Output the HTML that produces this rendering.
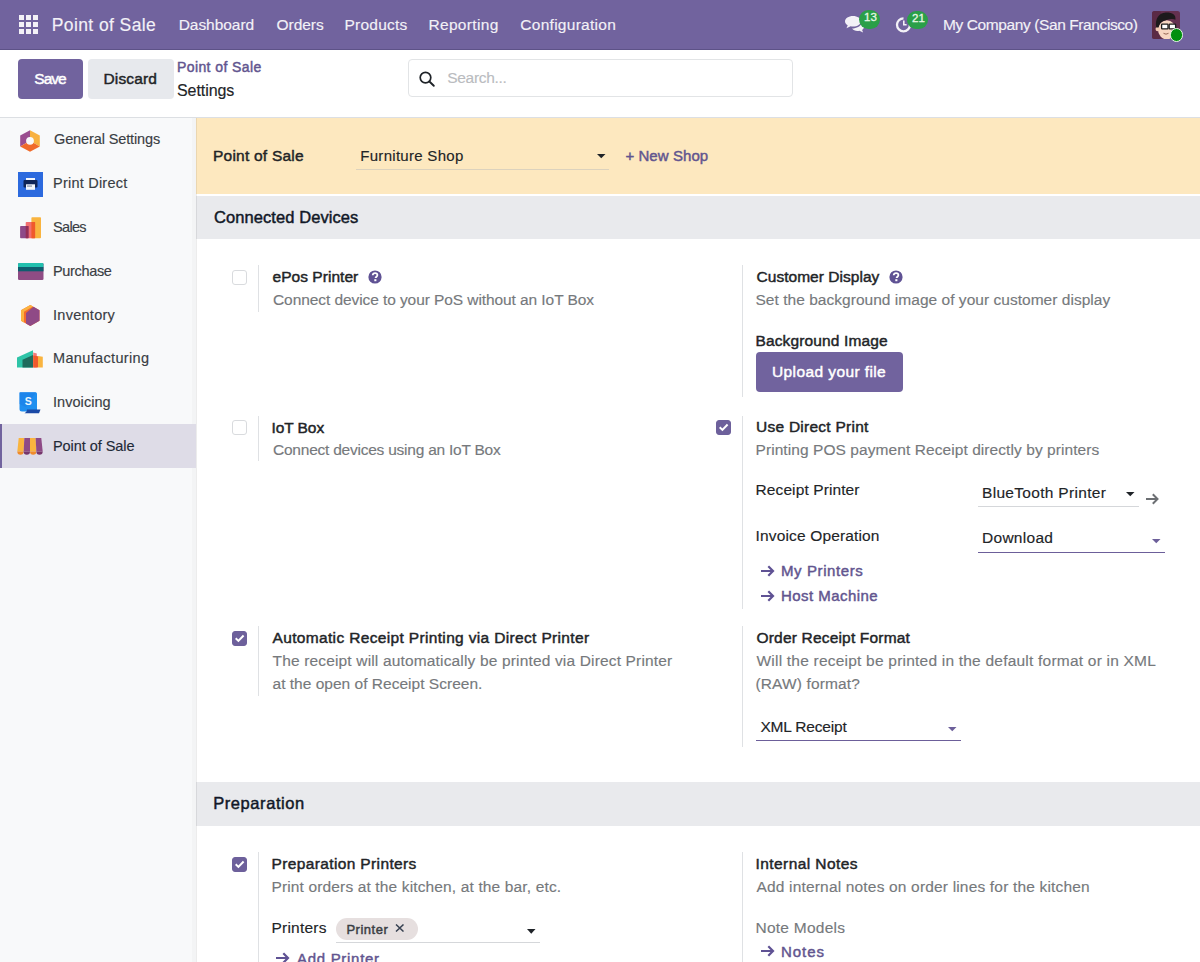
<!DOCTYPE html>
<html><head><meta charset="utf-8">
<style>
*{box-sizing:border-box;margin:0;padding:0}
html,body{width:1200px;height:962px;overflow:hidden;background:#fff;font-family:"Liberation Sans",sans-serif;color:#374151}
.a{position:absolute;white-space:nowrap;line-height:1}
.b{position:absolute}
.vl{position:absolute;width:1px;background:#dfe1e4}
.cb{position:absolute;width:15px;height:15px;border:1px solid #d9dbde;border-radius:3px;background:#fff}
.cbc{background:#6d609b;border-color:#6d609b}
.ul{position:absolute;height:1px;background:#d5d7da}
</style></head><body>
<!-- navbar -->
<div class="b" style="left:0;top:0;width:1200px;height:49px;background:#71639e"></div>
<div class="b" style="left:0;top:48.5px;width:1200px;height:1.5px;background:#5d5287"></div>
<svg class="b" style="left:19px;top:15px" width="19" height="19" viewBox="0 0 19 19" fill="#f3f1f7">
  <rect x="0" y="0" width="5" height="5"/><rect x="7" y="0" width="5" height="5"/><rect x="14" y="0" width="5" height="5"/>
  <rect x="0" y="7" width="5" height="5"/><rect x="7" y="7" width="5" height="5"/><rect x="14" y="7" width="5" height="5"/>
  <rect x="0" y="14" width="5" height="5"/><rect x="7" y="14" width="5" height="5"/><rect x="14" y="14" width="5" height="5"/>
</svg>
<!-- chat icon -->
<svg class="b" style="left:844px;top:15px" width="21" height="18" viewBox="0 0 21 18">
  <path d="M9 1C4.6 1 1 3.3 1 6.3c0 1.6 1 3 2.7 4L2.5 13.2 6.6 11.3c.8.2 1.6.3 2.4.3 4.4 0 8-2.4 8-5.3S13.4 1 9 1z" fill="#f3f1f7"/>
  <path d="M18 8.5c1.3.9 2 2 2 3.3 0 1.2-.7 2.3-1.9 3.1l1 2.6-3.7-1.7c-.6.1-1.2.2-1.9.2-2.4 0-4.5-1-5.4-2.4 4.5-.2 8.4-2.5 9.9-5.1z" fill="#f3f1f7"/>
</svg>
<div class="b" style="left:858.5px;top:9.5px;width:21.5px;height:19.5px;border-radius:10px;background:#2a9f48"></div>
<!-- activity icon -->
<svg class="b" style="left:894px;top:15px" width="20" height="19" viewBox="0 0 20 19">
  <path d="M9.5 3.3A6.5 6.5 0 1 0 16 9.8" fill="none" stroke="#f3f1f7" stroke-width="2.3"/>
  <path d="M9.8 5.5v4.3h2.8" fill="none" stroke="#f3f1f7" stroke-width="1.6"/>
</svg>
<div class="b" style="left:906.5px;top:10.5px;width:21.5px;height:18.5px;border-radius:10px;background:#2a9f48"></div>
<!-- avatar -->
<svg class="b" style="left:1152px;top:10.5px" width="28" height="28" viewBox="0 0 28 28">
  <rect x="0" y="0" width="28" height="28" rx="2.5" fill="#643150"/>
  <rect x="0" y="0" width="9" height="28" rx="2.5" fill="#5a2a45"/>
  <ellipse cx="14.8" cy="18.8" rx="8.8" ry="9.6" fill="#f6d6c2"/>
  <circle cx="5.8" cy="18" r="2.3" fill="#f2c9b4"/>
  <path d="M4.2 16.5C3 8 6.5 2 13.8 1.6C20 1.3 24.2 3.8 23.4 8.8C21.5 7.6 18 7.9 14.5 8.9C10.5 10 7.6 11.5 6.6 16.5Z" fill="#1c1a1c"/>
  <rect x="9.6" y="13.2" width="6.4" height="4.6" rx="0.6" fill="#fff" stroke="#1e1e1e" stroke-width="1.3"/>
  <rect x="17.2" y="13.2" width="6.4" height="4.6" rx="0.6" fill="#fff" stroke="#1e1e1e" stroke-width="1.3"/>
  <path d="M11.5 22.3q2.5 1.8 5 0" fill="none" stroke="#8a5a4a" stroke-width="0.9"/>
</svg>
<div class="b" style="left:1169.5px;top:28px;width:13.5px;height:13.5px;border-radius:50%;background:#008f0f;border:1.3px solid #e8f5e8"></div>

<!-- control panel -->
<div class="b" style="left:0;top:117px;width:1200px;height:1px;background:#dcdfe3"></div>
<div class="b" style="left:17.5px;top:59px;width:65.5px;height:40px;border-radius:4px;background:#71639e"></div>
<div class="b" style="left:87.5px;top:59px;width:86px;height:40px;border-radius:4px;background:#e7e9ed"></div>
<div class="b" style="left:408px;top:59px;width:384.5px;height:38px;border:1px solid #e2e4e6;border-radius:4px"></div>
<svg class="b" style="left:418px;top:70px" width="18" height="18" viewBox="0 0 18 18">
  <circle cx="7.5" cy="7.6" r="5.3" fill="none" stroke="#1f2328" stroke-width="1.7"/>
  <path d="M11.4 11.5l4.4 4.3" stroke="#1f2328" stroke-width="1.9" stroke-linecap="round"/>
</svg>

<!-- sidebar -->
<div class="b" style="left:0;top:118px;width:196px;height:844px;background:#f8f9fa"></div>
<div class="b" style="left:192px;top:118px;width:4px;height:844px;background:#f3f4f5"></div>
<div class="b" style="left:0;top:424px;width:196px;height:44px;background:#dedce7"></div>
<div class="b" style="left:0;top:424px;width:2px;height:44px;background:#71639e"></div>
<!-- general settings icon -->
<svg class="b" style="left:20px;top:129.5px" width="20" height="22" viewBox="0 0 20 22">
  <path d="M10 0.2L19.8 5.6V10.5H10Z M10 10.5 L19.8 10.5 V16.4 L10 21.8 L0.2 16.4Z" fill="none"/>
  <path d="M10 0.2L0.2 5.6V16.4L10 10.8Z" fill="#9a4e8f"/>
  <path d="M10 0.2L19.8 5.6V16.4L10 10.8Z" fill="#f8b13f"/>
  <path d="M0.2 16.4L10 10.8L19.8 16.4L10 21.8Z" fill="#f06a2a"/>
  <circle cx="10" cy="10.8" r="3.9" fill="#f8f9fa"/>
</svg>
<!-- print direct icon -->
<svg class="b" style="left:17.5px;top:172px" width="25" height="25" viewBox="0 0 25 25">
  <rect x="0" y="0" width="25" height="25" fill="#2c6ade"/>
  <rect x="8" y="6" width="9" height="3" fill="#f2f5fb"/>
  <rect x="5.5" y="8" width="14" height="7.5" rx="1" fill="#0e2458"/>
  <rect x="8" y="12.3" width="9" height="5.5" fill="#f2f5fb"/>
  <rect x="9" y="13.6" width="5" height="0.9" fill="#5a6b8a"/>
</svg>
<!-- sales icon -->
<svg class="b" style="left:19.5px;top:217px" width="22" height="22" viewBox="0 0 22 22">
  <rect x="11.4" y="0.2" width="9.6" height="21" rx="0.8" fill="#f9b43f"/>
  <rect x="5.7" y="5" width="9.4" height="16.2" rx="0.8" fill="#f27070"/>
  <rect x="11.4" y="5" width="3.7" height="16.2" fill="#f05a2b"/>
  <rect x="0.1" y="9" width="8.4" height="12.2" rx="0.8" fill="#8e4a88"/>
  <rect x="5.7" y="9" width="2.8" height="12.2" fill="#962f55"/>
</svg>
<!-- purchase icon -->
<svg class="b" style="left:17.5px;top:263px" width="26" height="18" viewBox="0 0 26 18">
  <rect x="0" y="0" width="25.5" height="17" rx="1.2" fill="#8f4c84"/>
  <path d="M1.2 0H24.3A1.2 1.2 0 0 1 25.5 1.2V4H0V1.2A1.2 1.2 0 0 1 1.2 0Z" fill="#22c0ae"/>
  <rect x="0" y="4" width="25.5" height="4.3" fill="#0f5d6e"/>
</svg>
<!-- inventory icon -->
<svg class="b" style="left:20.5px;top:305px" width="19" height="21" viewBox="0 0 19 21">
  <path d="M9.3 0L18.5 5.2V15.8L9.3 21L0 15.8V5.2Z" fill="#f36b2b"/>
  <path d="M9.3 0L0 5.2V15.8L3 17.5V6.8L12 1.5Z" fill="#fbb340"/>
  <path d="M12.5 1.8L18.5 5.2V15.8L9.3 21L5 18.5V8Z" fill="#8f4a86"/>
</svg>
<!-- manufacturing icon -->
<svg class="b" style="left:17px;top:350px" width="26" height="18" viewBox="0 0 26 18">
  <path d="M0 7.5L16 0.3V17.6H0Z" fill="#2ec4a7"/>
  <path d="M5.5 9.8L16 5V17.6H5.5Z" fill="#1f6b5c"/>
  <path d="M16.2 2.5L19.8 3.5V17.6H16.2Z" fill="#f27a7a"/>
  <path d="M16.2 5.5L21 6.3V17.6H16.2Z" fill="#f05a2b"/>
  <path d="M21 6L25.8 6.8V17.6H21Z" fill="#f9b43f"/>
</svg>
<!-- invoicing icon -->
<svg class="b" style="left:19px;top:392px" width="22" height="22" viewBox="0 0 22 22">
  <path d="M1.5 0.2H16.5A1.5 1.5 0 0 1 18 1.7V19.5H3A2.5 2.5 0 0 1 0.5 17V1.2A1 1 0 0 1 1.5 0.2Z" fill="#1e8ff0"/>
  <path d="M0.5 0.2H17L7 15L0.5 12Z" fill="#1a7ee8" opacity=".6"/>
  <path d="M8 17.5H21.5L20 21.2H5.5C7 20.5 8 19.2 8 17.5Z" fill="#1b4aa6"/>
  <text x="9.3" y="13.3" font-family="Liberation Sans" font-weight="bold" font-size="10.5" fill="#eaf5ff" text-anchor="middle">S</text>
</svg>
<!-- point of sale icon -->
<svg class="b" style="left:17px;top:437.5px" width="26" height="18" viewBox="0 0 26 18">
<path d="M1.70 0H7.35L6.65 13.6H0.30Z" fill="#f9b43f"/>
<path d="M0.30 13.6A3.175 3.175 0 0 0 6.65 13.6Z" fill="#f08a2a"/>
<path d="M7.35 0H13.00L13.00 13.6H6.65Z" fill="#8e4a86"/>
<path d="M6.65 13.6A3.175 3.175 0 0 0 13.00 13.6Z" fill="#76366c"/>
<path d="M13.00 0H18.65L19.35 13.6H13.00Z" fill="#f9b43f"/>
<path d="M13.00 13.6A3.175 3.175 0 0 0 19.35 13.6Z" fill="#f08a2a"/>
<path d="M18.65 0H24.30L25.70 13.6H19.35Z" fill="#8e4a86"/>
<path d="M19.35 13.6A3.175 3.175 0 0 0 25.70 13.6Z" fill="#76366c"/>
</svg>
<!-- settings header -->
<div class="b" style="left:196px;top:118px;width:1004px;height:75.5px;background:#fde8bf"></div>
<div class="ul" style="left:356px;top:169px;width:253px;background:#dcd2bd"></div>
<svg class="b" style="left:597px;top:154px" width="9" height="5" viewBox="0 0 9 5"><path d="M0 0H8.5L4.25 4.3Z" fill="#1f2328"/></svg>

<!-- sections -->
<div class="b" style="left:196px;top:195.5px;width:1004px;height:43px;background:#e9eaed"></div>
<div class="b" style="left:196px;top:782px;width:1004px;height:44px;background:#e9eaed"></div>

<!-- left column -->
<div class="vl" style="left:258px;top:265px;height:47px"></div>
<div class="cb" style="left:232px;top:270px"></div>
<div class="vl" style="left:258px;top:415.5px;height:45px"></div>
<div class="cb" style="left:232px;top:420px"></div>
<div class="vl" style="left:258px;top:626px;height:69.5px"></div>
<div class="cb cbc" style="left:232px;top:631px"><svg style="position:absolute;left:-1px;top:-1px" width="15" height="15" viewBox="0 0 15 15"><path d="M3.7 7.3L6.4 9.9L11.6 4.5" fill="none" stroke="#fff" stroke-width="2"/></svg></div>
<div class="vl" style="left:258px;top:852px;height:110px"></div>
<div class="cb cbc" style="left:232px;top:856.5px"><svg style="position:absolute;left:-1px;top:-1px" width="15" height="15" viewBox="0 0 15 15"><path d="M3.7 7.3L6.4 9.9L11.6 4.5" fill="none" stroke="#fff" stroke-width="2"/></svg></div>
<!-- tag -->
<div class="b" style="left:335.5px;top:917.5px;width:82px;height:22.5px;border-radius:11px;background:#e6dfdf"></div>
<svg class="b" style="left:395px;top:923.5px" width="10" height="8" viewBox="0 0 10 8"><path d="M1 0.5L8.5 7.5M8.5 0.5L1 7.5" stroke="#374151" stroke-width="1.5"/></svg>
<div class="ul" style="left:335.5px;top:941.5px;width:204.5px"></div>
<svg class="b" style="left:527px;top:928.5px" width="9" height="5" viewBox="0 0 9 5"><path d="M0 0H8.5L4.25 4.8Z" fill="#1f2328"/></svg>
<svg class="b" style="left:275px;top:951.5px" width="15" height="12" viewBox="0 0 15 12"><path d="M1 6H13M8.3 1.3L13 6L8.3 10.7" fill="none" stroke="#5f5294" stroke-width="2.2"/></svg>

<!-- right column -->
<div class="vl" style="left:742px;top:265px;height:132px"></div>
<div class="vl" style="left:742px;top:415.5px;height:193px"></div>
<div class="cb cbc" style="left:716px;top:420px"><svg style="position:absolute;left:-1px;top:-1px" width="15" height="15" viewBox="0 0 15 15"><path d="M3.7 7.3L6.4 9.9L11.6 4.5" fill="none" stroke="#fff" stroke-width="2"/></svg></div>
<div class="vl" style="left:742px;top:626px;height:121px"></div>
<div class="vl" style="left:742px;top:852px;height:110px"></div>
<div class="b" style="left:756px;top:352px;width:147px;height:40px;border-radius:4px;background:#71639e"></div>
<!-- help icons -->
<svg class="b" style="left:368px;top:269.5px" width="14" height="14" viewBox="0 0 14 14"><circle cx="7" cy="7" r="6.6" fill="#5f5294"/><path d="M4.7 5.2C4.8 3.8 5.8 3.1 7.1 3.1c1.4 0 2.3.8 2.3 2 0 1.6-1.8 1.6-1.8 3" fill="none" stroke="#fff" stroke-width="1.8"/><rect x="6.3" y="9.2" width="2.1" height="2" fill="#fff"/></svg>
<svg class="b" style="left:889px;top:269.5px" width="14" height="14" viewBox="0 0 14 14"><circle cx="7" cy="7" r="6.6" fill="#5f5294"/><path d="M4.7 5.2C4.8 3.8 5.8 3.1 7.1 3.1c1.4 0 2.3.8 2.3 2 0 1.6-1.8 1.6-1.8 3" fill="none" stroke="#fff" stroke-width="1.8"/><rect x="6.3" y="9.2" width="2.1" height="2" fill="#fff"/></svg>
<!-- receipt printer field -->
<div class="ul" style="left:978px;top:506px;width:161px"></div>
<svg class="b" style="left:1125.5px;top:492px" width="9" height="5" viewBox="0 0 9 5"><path d="M0 0H8.5L4.25 4.2Z" fill="#1f2328"/></svg>
<svg class="b" style="left:1144.5px;top:492.5px" width="14" height="12" viewBox="0 0 14 12"><path d="M1 6H12.5M7.8 1.3L12.5 6L7.8 10.7" fill="none" stroke="#6c6f73" stroke-width="2"/></svg>
<!-- invoice operation field -->
<div class="ul" style="left:978px;top:551.5px;width:187px;height:1.5px;background:#6c5f9a"></div>
<svg class="b" style="left:1152px;top:539px" width="9" height="5" viewBox="0 0 9 5"><path d="M0 0H8.5L4.25 4.3Z" fill="#6c5f9a"/></svg>
<!-- arrows -->
<svg class="b" style="left:759.5px;top:564.5px" width="15" height="12" viewBox="0 0 15 12"><path d="M1 6H13M8.3 1.3L13 6L8.3 10.7" fill="none" stroke="#5f5294" stroke-width="2.2"/></svg>
<svg class="b" style="left:759.5px;top:590px" width="15" height="12" viewBox="0 0 15 12"><path d="M1 6H13M8.3 1.3L13 6L8.3 10.7" fill="none" stroke="#5f5294" stroke-width="2.2"/></svg>
<svg class="b" style="left:759.5px;top:944.5px" width="15" height="12" viewBox="0 0 15 12"><path d="M1 6H13M8.3 1.3L13 6L8.3 10.7" fill="none" stroke="#5f5294" stroke-width="2.2"/></svg>
<!-- xml receipt field -->
<div class="ul" style="left:756px;top:739.5px;width:204.5px;height:1.5px;background:#6c5f9a"></div>
<svg class="b" style="left:947.5px;top:727px" width="9" height="5" viewBox="0 0 9 5"><path d="M0 0H8.5L4.25 4.3Z" fill="#6c5f9a"/></svg>
<!-- checkmarks -->

<div class="b" style="left:196px;top:118px;width:1px;height:844px;background:rgba(0,0,0,0.075)"></div>
<div class="a" style="left:51.70px;top:16.60px;font-size:17.5px;font-weight:normal;-webkit-text-stroke:0.15px currentColor;color:#f3f1f7;letter-spacing:0.408px">Point of Sale</div>
<div class="a" style="left:178.70px;top:17.40px;font-size:15.5px;font-weight:normal;-webkit-text-stroke:0.15px currentColor;color:#f3f1f7;letter-spacing:-0.050px">Dashboard</div>
<div class="a" style="left:276.50px;top:17.40px;font-size:15.5px;font-weight:normal;-webkit-text-stroke:0.15px currentColor;color:#f3f1f7;letter-spacing:-0.040px">Orders</div>
<div class="a" style="left:344.50px;top:17.40px;font-size:15.5px;font-weight:normal;-webkit-text-stroke:0.15px currentColor;color:#f3f1f7;letter-spacing:0.243px">Products</div>
<div class="a" style="left:428.40px;top:17.40px;font-size:15.5px;font-weight:normal;-webkit-text-stroke:0.15px currentColor;color:#f3f1f7;letter-spacing:0.338px">Reporting</div>
<div class="a" style="left:520.30px;top:17.40px;font-size:15.5px;font-weight:normal;-webkit-text-stroke:0.15px currentColor;color:#f3f1f7;letter-spacing:0.275px">Configuration</div>
<div class="a" style="left:943.00px;top:17.40px;font-size:15.5px;font-weight:normal;-webkit-text-stroke:0.15px currentColor;color:#f3f1f7;letter-spacing:-0.400px">My Company (San Francisco)</div>
<div class="a" style="left:34.30px;top:71.40px;font-size:15.5px;font-weight:normal;-webkit-text-stroke:0.45px currentColor;color:#fff;letter-spacing:-1.000px">Save</div>
<div class="a" style="left:103.50px;top:71.30px;font-size:15.5px;font-weight:normal;-webkit-text-stroke:0.45px currentColor;color:#222427;letter-spacing:0.133px">Discard</div>
<div class="a" style="left:177.00px;top:60.00px;font-size:14px;font-weight:normal;-webkit-text-stroke:0.45px currentColor;color:#62558f;letter-spacing:0.400px">Point of Sale</div>
<div class="a" style="left:177.00px;top:82.50px;font-size:16px;font-weight:normal;-webkit-text-stroke:0.15px currentColor;color:#222427;letter-spacing:-0.071px">Settings</div>
<div class="a" style="left:447.30px;top:70.30px;font-size:15.5px;font-weight:normal;-webkit-text-stroke:0.15px currentColor;color:#babcbf;letter-spacing:-0.325px">Search...</div>
<div class="a" style="left:54.00px;top:132.30px;font-size:14.5px;font-weight:normal;-webkit-text-stroke:0.15px currentColor;color:#3a3e44;letter-spacing:-0.120px">General Settings</div>
<div class="a" style="left:53.00px;top:176.20px;font-size:14.5px;font-weight:normal;-webkit-text-stroke:0.15px currentColor;color:#3a3e44;letter-spacing:0.227px">Print Direct</div>
<div class="a" style="left:53.00px;top:219.80px;font-size:14.5px;font-weight:normal;-webkit-text-stroke:0.15px currentColor;color:#3a3e44;letter-spacing:-0.675px">Sales</div>
<div class="a" style="left:53.00px;top:263.60px;font-size:14.5px;font-weight:normal;-webkit-text-stroke:0.15px currentColor;color:#3a3e44;letter-spacing:-0.343px">Purchase</div>
<div class="a" style="left:53.00px;top:307.60px;font-size:14.5px;font-weight:normal;-webkit-text-stroke:0.15px currentColor;color:#3a3e44;letter-spacing:0.275px">Inventory</div>
<div class="a" style="left:53.00px;top:351.40px;font-size:14.5px;font-weight:normal;-webkit-text-stroke:0.15px currentColor;color:#3a3e44;letter-spacing:0.342px">Manufacturing</div>
<div class="a" style="left:53.00px;top:395.10px;font-size:14.5px;font-weight:normal;-webkit-text-stroke:0.15px currentColor;color:#3a3e44;letter-spacing:0.050px">Invoicing</div>
<div class="a" style="left:53.00px;top:438.80px;font-size:14.5px;font-weight:normal;-webkit-text-stroke:0.15px currentColor;color:#1f2937;letter-spacing:-0.058px">Point of Sale</div>
<div class="a" style="left:213.00px;top:147.80px;font-size:15.5px;font-weight:normal;-webkit-text-stroke:0.45px currentColor;color:#222427;letter-spacing:0.225px">Point of Sale</div>
<div class="a" style="left:360.30px;top:148.30px;font-size:15px;font-weight:normal;-webkit-text-stroke:0.15px currentColor;color:#222427;letter-spacing:0.285px">Furniture Shop</div>
<div class="a" style="left:625.40px;top:148.30px;font-size:15px;font-weight:normal;-webkit-text-stroke:0.45px currentColor;color:#62558f;letter-spacing:0.067px">+ New Shop</div>
<div class="a" style="left:214.00px;top:209.00px;font-size:16.5px;font-weight:normal;-webkit-text-stroke:0.45px currentColor;color:#111827;letter-spacing:0.081px">Connected Devices</div>
<div class="a" style="left:213.20px;top:795.00px;font-size:16.5px;font-weight:normal;-webkit-text-stroke:0.45px currentColor;color:#111827;letter-spacing:0.570px">Preparation</div>
<div class="a" style="left:272.50px;top:269.00px;font-size:15.5px;font-weight:normal;-webkit-text-stroke:0.45px currentColor;color:#222427;letter-spacing:0.045px">ePos Printer</div>
<div class="a" style="left:273.00px;top:292.00px;font-size:15.5px;font-weight:normal;-webkit-text-stroke:0.15px currentColor;color:#76797c;letter-spacing:-0.080px">Connect device to your PoS without an IoT Box</div>
<div class="a" style="left:271.50px;top:419.50px;font-size:15.5px;font-weight:normal;-webkit-text-stroke:0.45px currentColor;color:#222427;letter-spacing:-0.083px">IoT Box</div>
<div class="a" style="left:273.00px;top:442.00px;font-size:15.5px;font-weight:normal;-webkit-text-stroke:0.15px currentColor;color:#76797c;letter-spacing:-0.232px">Connect devices using an IoT Box</div>
<div class="a" style="left:272.50px;top:630.00px;font-size:15.5px;font-weight:normal;-webkit-text-stroke:0.45px currentColor;color:#222427;letter-spacing:0.343px">Automatic Receipt Printing via Direct Printer</div>
<div class="a" style="left:272.50px;top:653.00px;font-size:15.5px;font-weight:normal;-webkit-text-stroke:0.15px currentColor;color:#76797c;letter-spacing:0.161px">The receipt will automatically be printed via Direct Printer</div>
<div class="a" style="left:272.50px;top:676.00px;font-size:15.5px;font-weight:normal;-webkit-text-stroke:0.15px currentColor;color:#76797c;letter-spacing:0.017px">at the open of Receipt Screen.</div>
<div class="a" style="left:271.50px;top:856.00px;font-size:15.5px;font-weight:normal;-webkit-text-stroke:0.45px currentColor;color:#222427;letter-spacing:0.368px">Preparation Printers</div>
<div class="a" style="left:271.50px;top:879.40px;font-size:15.5px;font-weight:normal;-webkit-text-stroke:0.15px currentColor;color:#76797c;letter-spacing:0.139px">Print orders at the kitchen, at the bar, etc.</div>
<div class="a" style="left:271.50px;top:919.80px;font-size:15.5px;font-weight:normal;-webkit-text-stroke:0.15px currentColor;color:#222427;letter-spacing:0.214px">Printers</div>
<div class="a" style="left:346.40px;top:922.50px;font-size:13px;font-weight:normal;-webkit-text-stroke:0.45px currentColor;color:#3a3e44;letter-spacing:0.517px">Printer</div>
<div class="a" style="left:297.00px;top:951.00px;font-size:15px;font-weight:normal;-webkit-text-stroke:0.45px currentColor;color:#62558f;letter-spacing:0.700px">Add Printer</div>
<div class="a" style="left:756.50px;top:269.00px;font-size:15.5px;font-weight:normal;-webkit-text-stroke:0.45px currentColor;color:#222427;letter-spacing:0.033px">Customer Display</div>
<div class="a" style="left:755.50px;top:292.00px;font-size:15.5px;font-weight:normal;-webkit-text-stroke:0.15px currentColor;color:#76797c;letter-spacing:0.031px">Set the background image of your customer display</div>
<div class="a" style="left:755.50px;top:332.80px;font-size:15.5px;font-weight:normal;-webkit-text-stroke:0.45px currentColor;color:#222427;letter-spacing:0.133px">Background Image</div>
<div class="a" style="left:772.00px;top:364.30px;font-size:15.5px;font-weight:normal;-webkit-text-stroke:0.45px currentColor;color:#fff;letter-spacing:0.400px">Upload your file</div>
<div class="a" style="left:756.00px;top:419.00px;font-size:15.5px;font-weight:normal;-webkit-text-stroke:0.45px currentColor;color:#222427;letter-spacing:0.253px">Use Direct Print</div>
<div class="a" style="left:755.50px;top:442.00px;font-size:15.5px;font-weight:normal;-webkit-text-stroke:0.15px currentColor;color:#76797c;letter-spacing:0.073px">Printing POS payment Receipt directly by printers</div>
<div class="a" style="left:755.50px;top:482.40px;font-size:15.5px;font-weight:normal;-webkit-text-stroke:0.15px currentColor;color:#222427;letter-spacing:0.107px">Receipt Printer</div>
<div class="a" style="left:982.00px;top:484.50px;font-size:15.5px;font-weight:normal;-webkit-text-stroke:0.15px currentColor;color:#222427;letter-spacing:0.312px">BlueTooth Printer</div>
<div class="a" style="left:755.50px;top:528.00px;font-size:15.5px;font-weight:normal;-webkit-text-stroke:0.15px currentColor;color:#222427;letter-spacing:0.156px">Invoice Operation</div>
<div class="a" style="left:982.00px;top:530.30px;font-size:15.5px;font-weight:normal;-webkit-text-stroke:0.15px currentColor;color:#222427;letter-spacing:0.286px">Download</div>
<div class="a" style="left:781.00px;top:562.80px;font-size:15px;font-weight:normal;-webkit-text-stroke:0.45px currentColor;color:#62558f;letter-spacing:0.600px">My Printers</div>
<div class="a" style="left:781.00px;top:587.80px;font-size:15px;font-weight:normal;-webkit-text-stroke:0.45px currentColor;color:#62558f;letter-spacing:0.455px">Host Machine</div>
<div class="a" style="left:756.50px;top:630.00px;font-size:15.5px;font-weight:normal;-webkit-text-stroke:0.45px currentColor;color:#222427;letter-spacing:0.184px">Order Receipt Format</div>
<div class="a" style="left:756.50px;top:653.00px;font-size:15.5px;font-weight:normal;-webkit-text-stroke:0.15px currentColor;color:#76797c;letter-spacing:0.216px">Will the receipt be printed in the default format or in XML</div>
<div class="a" style="left:755.50px;top:676.00px;font-size:15.5px;font-weight:normal;-webkit-text-stroke:0.15px currentColor;color:#76797c;letter-spacing:0.125px">(RAW) format?</div>
<div class="a" style="left:760.40px;top:718.70px;font-size:15.5px;font-weight:normal;-webkit-text-stroke:0.15px currentColor;color:#222427;letter-spacing:-0.170px">XML Receipt</div>
<div class="a" style="left:755.50px;top:856.00px;font-size:15.5px;font-weight:normal;-webkit-text-stroke:0.45px currentColor;color:#222427;letter-spacing:0.423px">Internal Notes</div>
<div class="a" style="left:756.50px;top:878.70px;font-size:15.5px;font-weight:normal;-webkit-text-stroke:0.15px currentColor;color:#76797c;letter-spacing:0.173px">Add internal notes on order lines for the kitchen</div>
<div class="a" style="left:755.50px;top:919.50px;font-size:15.5px;font-weight:normal;-webkit-text-stroke:0.15px currentColor;color:#76797c;letter-spacing:0.250px">Note Models</div>
<div class="a" style="left:781.00px;top:943.70px;font-size:15px;font-weight:normal;-webkit-text-stroke:0.45px currentColor;color:#62558f;letter-spacing:0.950px">Notes</div>
<div class="a" style="left:864px;top:12.3px;font-size:11.5px;-webkit-text-stroke:0.3px #e9f7e6;color:#e9f7e6">13</div>
<div class="a" style="left:912px;top:13px;font-size:11.5px;-webkit-text-stroke:0.3px #e9f7e6;color:#e9f7e6">21</div>
</body></html>
